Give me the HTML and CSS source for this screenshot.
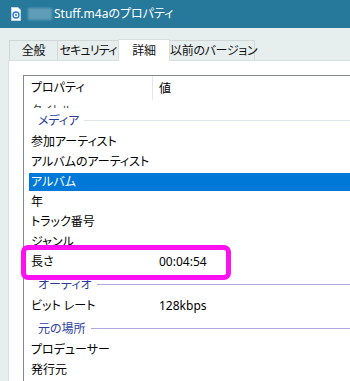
FILE: index.html
```html
<!DOCTYPE html>
<html lang="ja">
<head>
    <meta charset="UTF-8">
    <title>Stuff.m4aのプロパティ</title>
    <link rel="stylesheet" href="styles.css">
</head>
<body>
    <!-- Title bar -->
    <div class="titlebar">
        <svg class="file-icon" width="10" height="14" viewBox="0 0 10 14">
            <path d="M0.5 0.5 H7 L9.5 3 V13.5 H0.5 Z" fill="#fff" stroke="#c8d4dc"/>
            <circle cx="5" cy="8" r="3" fill="none" stroke="#2a7fd4" stroke-width="1.4"/>
            <circle cx="5" cy="8" r="1" fill="#2a7fd4"/>
        </svg>
        <span class="blur"></span>
        <span class="title">Stuff.m4aのプロパティ</span>
    </div>

    <!-- Tabs -->
    <div class="tabstrip">
        <div class="tab tab-general">全般</div>
        <div class="tab tab-security">セキュリティ</div>
        <div class="tab tab-details active">詳細</div>
        <div class="tab tab-previous">以前のバージョン</div>
    </div>

    <!-- Details panel -->
    <div class="panel">
        <div class="list">
            <div class="list-head">
                <div class="col-name">プロパティ</div>
                <div class="col-value">値</div>
            </div>
            <div class="clipped"><span>タイトル</span></div>

            <div class="group light"><span>メディア</span></div>
            <div class="row"><div class="col-name">参加アーティスト</div></div>
            <div class="row"><div class="col-name">アルバムのアーティスト</div></div>
            <div class="row selected"><div class="col-name">アルバム</div></div>
            <div class="row"><div class="col-name">年</div></div>
            <div class="row"><div class="col-name">トラック番号</div></div>
            <div class="row"><div class="col-name">ジャンル</div></div>
            <div class="row"><div class="col-name">長さ</div><div class="col-value">00:04:54</div></div>

            <div class="group"><span>オーディオ</span></div>
            <div class="row"><div class="col-name">ビット レート</div><div class="col-value">128kbps</div></div>

            <div class="group"><span>元の場所</span></div>
            <div class="row"><div class="col-name">プロデューサー</div></div>
            <div class="row"><div class="col-name">発行元</div></div>
        </div>

        <!-- annotation -->
        <div class="highlight"></div>
    </div>
</body>
</html>
```

FILE: styles.css
```css
* {
    margin: 0;
    padding: 0;
    box-sizing: border-box;
}

body {
    width: 350px;
    height: 381px;
    overflow: hidden;
    background: #e6eeee;
    font-family: "Noto Sans", "Noto Sans CJK JP", sans-serif;
    font-size: 12px;
    font-feature-settings: "palt";
    color: #000;
}

/* Title bar */
.titlebar {
    height: 28px;
    background: #27799b;
    display: flex;
    align-items: center;
    padding-left: 11px;
    color: #fff;
}

.file-icon {
    flex: none;
}

.blur {
    width: 24px;
    height: 12px;
    margin-left: 7px;
    background: #5f9cb6;
    filter: blur(1px);
}

.title {
    margin-left: 2px;
    font-size: 12px;
    line-height: 14px;
}

/* Tabs */
.tabstrip {
    height: 32px;
    display: flex;
    align-items: flex-end;
    padding-left: 9px;
}

.tab {
    height: 20px;
    border: 1px solid #d0d7d7;
    border-bottom: none;
    margin-right: -1px;
    line-height: 20px;
    text-align: center;
    white-space: nowrap;
    letter-spacing: -0.3px;
    color: #111;
    flex: none;
}

.tab-general { width: 49px; }
.tab-security { width: 62px; letter-spacing: -0.9px; }
.tab-details { width: 52px; }
.tab-previous { width: 86px; }

.tab.active {
    height: 22px;
    background: #fff;
    line-height: 22px;
    position: relative;
    margin-bottom: -1px;
    z-index: 1;
    border-color: #d9dede;
}

/* Panel */
.panel {
    position: relative;
    height: 321px;
    margin-left: 8px;
    background: #fff;
    border-top: 1px solid #d9dede;
    border-left: 1px solid #d9dede;
    padding: 14px 0 0 14px;
}

.list {
    height: 100%;
    border-top: 1px solid #828790;
    border-left: 1px solid #828790;
    padding-left: 5px;
    overflow: hidden;
}

.list-head {
    height: 24px;
    display: flex;
    align-items: center;
}

.col-name {
    width: 124px;
    padding-left: 2px;
    flex: none;
}

.list-head .col-name {
    height: 24px;
    line-height: 24px;
    border-right: 1px solid #e5e5e5;
}

.col-value {
    padding-left: 6px;
}

.clipped {
    height: 8px;
    overflow: hidden;
    padding-left: 2px;
    color: #444;
}

.clipped span {
    display: block;
    height: 8px;
    overflow: hidden;
    margin-top: 1px;
    line-height: 20px;
}

.group {
    height: 24px;
    display: flex;
    align-items: center;
    padding-left: 9px;
    color: #2b3c9c;
}

.group::after {
    content: "";
    flex: 1;
    height: 1px;
    margin-left: 5px;
    background: #aaaadf;
}

.group.light::after {
    background: #dce4ec;
}

.row {
    height: 20px;
    display: flex;
    align-items: center;
    line-height: 20px;
}

.row.selected {
    background: #0078d7;
    color: #fff;
    height: 18px;
    margin: 1px 0;
}

/* Annotation box */
.highlight {
    position: absolute;
    left: 12px;
    top: 184px;
    width: 210px;
    height: 35px;
    border: 5px solid #ff10f0;
    border-radius: 7px;
}
```
